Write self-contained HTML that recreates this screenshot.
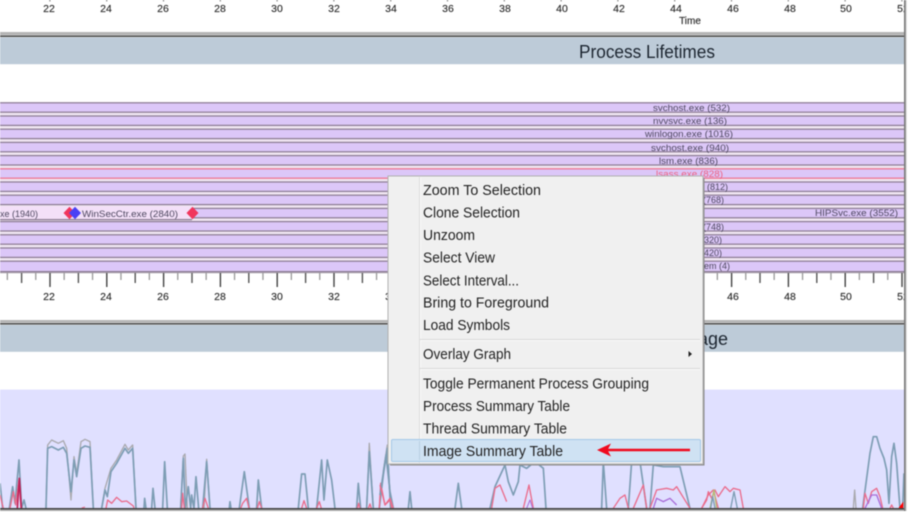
<!DOCTYPE html>
<html>
<head>
<meta charset="utf-8">
<style>
html,body{margin:0;padding:0;background:#fff;width:908px;height:512px;overflow:hidden}
svg{display:block;filter:blur(0.45px)}
text{font-family:"Liberation Sans",sans-serif}
.ax{font-size:10.5px;fill:#2c2c2c;text-anchor:middle;stroke:#2c2c2c;stroke-width:.15px}
.lb{font-size:9px;fill:#4e4860;text-anchor:end}
.m{font-size:14.5px;fill:#222}
.t{font-size:18px;fill:#1c2530}
</style>
</head>
<body>
<svg width="908" height="512" viewBox="0 0 908 512" xmlns="http://www.w3.org/2000/svg">
<rect width="908" height="512" fill="#fff"/>

<!-- top axis -->
<line x1="-7.5" x2="904" y1="0.7" y2="0.7" stroke="#777" stroke-width="1.4" stroke-dasharray="1.2 55.6"/>
<text class="ax" x="49" y="12">22</text><text class="ax" x="106" y="12">24</text><text class="ax" x="163" y="12">26</text><text class="ax" x="220" y="12">28</text><text class="ax" x="277" y="12">30</text><text class="ax" x="334" y="12">32</text><text class="ax" x="391" y="12">34</text><text class="ax" x="448" y="12">36</text><text class="ax" x="505" y="12">38</text><text class="ax" x="562" y="12">40</text><text class="ax" x="619" y="12">42</text><text class="ax" x="676" y="12">44</text><text class="ax" x="733" y="12">46</text><text class="ax" x="790" y="12">48</text><text class="ax" x="846" y="12">50</text><text class="ax" x="903" y="12">52</text>
<text class="ax" x="690" y="24" style="font-size:10px">Time</text>

<!-- Process Lifetimes header -->
<rect x="0" y="32" width="908" height="3" fill="#b4b4b4"/>
<rect x="0" y="35.4" width="908" height="1.6" fill="#4c4c4c"/>
<rect x="0" y="37.4" width="908" height="26.8" fill="#bdcbd8"/>
<text class="t" x="579" y="58" textLength="136" lengthAdjust="spacingAndGlyphs">Process Lifetimes</text>

<!-- process rows -->
<rect x="0" y="102" width="908" height="170.6" fill="#efe5f1"/>
<g fill="#dcc7f8" stroke="#8a7a92" stroke-width="1.2">
<rect x="-2" y="102.8" width="912" height="9.4"/>
<rect x="-2" y="116" width="912" height="9.4"/>
<rect x="-2" y="129.2" width="912" height="9.4"/>
<rect x="-2" y="142.4" width="912" height="9.4"/>
<rect x="-2" y="155.6" width="912" height="9.4"/>
<rect x="-2" y="168.8" width="912" height="9.4" stroke="#ee6f8c"/>
<rect x="-2" y="182" width="912" height="9.4"/>
<rect x="-2" y="195.2" width="912" height="9.4"/>
<rect x="-2" y="208.4" width="912" height="9.4"/>
<rect x="-2" y="221.6" width="912" height="9.4"/>
<rect x="-2" y="234.8" width="912" height="9.4"/>
<rect x="-2" y="248" width="912" height="9.4"/>
<rect x="-2" y="261.2" width="912" height="10.4"/>
</g>
<rect x="0" y="206.4" width="192" height="13" fill="#f3e0f8"/>
<line x1="0" x2="192" y1="219.6" y2="219.6" stroke="#8a7a92" stroke-width="1.2"/>

<text class="lb" x="730" y="111" textLength="77" lengthAdjust="spacingAndGlyphs" dx="-77" style="text-anchor:start">svchost.exe (532)</text>
<text class="lb" x="727" y="124" textLength="74" lengthAdjust="spacingAndGlyphs" dx="-74" style="text-anchor:start">nvvsvc.exe (136)</text>
<text class="lb" x="733" y="137" textLength="88" lengthAdjust="spacingAndGlyphs" dx="-88" style="text-anchor:start">winlogon.exe (1016)</text>
<text class="lb" x="729" y="151" textLength="78" lengthAdjust="spacingAndGlyphs" dx="-78" style="text-anchor:start">svchost.exe (940)</text>
<text class="lb" x="718" y="164" textLength="59" lengthAdjust="spacingAndGlyphs" dx="-59" style="text-anchor:start">lsm.exe (836)</text>
<text class="lb" x="723" y="177" textLength="67" lengthAdjust="spacingAndGlyphs" dx="-67" style="text-anchor:start;fill:#ee5f80">lsass.exe (828)</text>
<text class="lb" x="728" y="190">services.exe (812)</text>
<text class="lb" x="724" y="203">csrss.exe (768)</text>
<text class="lb" x="724" y="230">csrss.exe (748)</text>
<text class="lb" x="722" y="243">smss.exe (320)</text>
<text class="lb" x="722" y="256">smss.exe (420)</text>
<text class="lb" x="730" y="269">System (4)</text>
<text class="lb" x="898" y="216" textLength="83" lengthAdjust="spacingAndGlyphs" style="text-anchor:start" dx="-83">HIPSvc.exe (3552)</text>
<text class="lb" x="38" y="217">explorer.exe (1940)</text>
<text class="lb" x="82" y="217" textLength="96" lengthAdjust="spacingAndGlyphs" style="text-anchor:start">WinSecCtr.exe (2840)</text>
<polygon points="63.5,213 69.5,206.8 75.5,213 69.5,219.2" fill="#f0355c"/>
<polygon points="69,213 75,206.8 81,213 75,219.2" fill="#4a40f4"/>
<polygon points="186.5,213 192.5,206.8 198.5,213 192.5,219.2" fill="#f0355c"/>

<!-- middle axis -->
<rect x="0" y="272" width="908" height="1.2" fill="#a49aa8"/>
<line x1="-7.5" x2="904" y1="280" y2="280" stroke="#444" stroke-width="14" stroke-dasharray="1.4 55.4"/>
<line x1="20.9" x2="904" y1="278" y2="278" stroke="#555" stroke-width="10" stroke-dasharray="1.4 55.4"/>
<line x1="6.7" x2="904" y1="276.5" y2="276.5" stroke="#999" stroke-width="7" stroke-dasharray="1.3 27.1"/>
<text class="ax" x="49" y="300">22</text><text class="ax" x="106" y="300">24</text><text class="ax" x="163" y="300">26</text><text class="ax" x="220" y="300">28</text><text class="ax" x="277" y="300">30</text><text class="ax" x="334" y="300">32</text><text class="ax" x="391" y="300">34</text><text class="ax" x="733" y="300">46</text><text class="ax" x="790" y="300">48</text><text class="ax" x="846" y="300">50</text><text class="ax" x="903" y="300">52</text>

<!-- second header -->
<rect x="0" y="320" width="908" height="2.6" fill="#b4b4b4"/>
<rect x="0" y="323" width="908" height="1.6" fill="#4c4c4c"/>
<rect x="0" y="325" width="908" height="26.8" fill="#bdcbd8"/>
<text class="t" x="728" y="345" text-anchor="end">CPU Usage</text>

<!-- graph -->
<rect x="0" y="389.6" width="908" height="118.4" fill="#e0e0ff"/>
<g fill="none" stroke-linejoin="round">
<g transform="translate(0,380) scale(.3333)">
<g stroke="#a9a9ae" stroke-width="4">
<path d="M138 385 143 195 155 180 175 190 190 182 200 205 213 360 222 230 230 280 243 185 255 178 270 185 280 385"/>
<path d="M305 385 315 325 333 265 350 240 375 193 385 210 398 195 408 385M1100 385 1108 190 1120 385M1150 275 1162 195 1172 385M542 385 550 228 555 222 562 385M612 385 620 238 630 385"/>
</g>
<g stroke="#7d9db4" stroke-width="5">
<path d="M0 310 8 385M28 385 38 320 45 370 57 240 65 385 72 360 78 385"/>
<path d="M138 385 143 205 155 200 175 210 190 202 200 220 213 335 222 240 230 290 243 205 255 198 270 202 280 385"/>
<path d="M305 385 315 330 322 350 333 275 350 250 375 205 385 220 398 205 408 385"/>
<path d="M432 385 434 355 438 385M455 385 459 325 465 385M488 385 494 245 502 385"/>
<path d="M542 385 550 235 556 385 565 320 572 385 575 345 582 385 588 290 596 385M608 385 620 245 630 385"/>
<path d="M688 385 690 365 693 385M718 385 733 275 748 385M770 385 775 300 785 385"/>
<path d="M895 385 905 282 915 282 925 385M950 385 965 240 972 360 982 240 995 300 1005 385"/>
<path d="M1070 385 1075 310 1082 385M1100 385 1108 215 1120 385M1138 385 1150 285 1162 205 1172 385"/>
</g>
<g stroke="#ea6c8c" stroke-width="4">
<path d="M0 345 10 385M30 385 40 335 47 375 57 300 63 385"/>
<path d="M318 385 323 360 335 370 350 352 365 365 380 363 400 378 402 385"/>
<path d="M545 385 548 340 553 385M608 385 615 355 625 385M722 385 728 370 740 355 747 385M772 385 778 365 785 385"/>
<path d="M905 385 912 362 920 385M950 385 958 365 964 385M1072 385 1076 370 1080 385M1105 385 1110 372 1114 385M1138 385 1142 310 1155 375 1170 360 1176 385"/>
<path d="M245 384 255 381" stroke-width="3"/>
</g>
<path d="M52 385 58 295 64 385" stroke="#c02058" stroke-width="5"/>
</g>
<g transform="translate(380,335) scale(.3333)">
<g stroke="#7d9db4" stroke-width="5">
<path d="M0 480 18 360 30 470 40 520M85 520 90 470 95 520M225 520 235 445 245 520"/>
<path d="M330 520 345 455 375 390 385 440 400 480 415 440 420 390 440 400 465 380 490 400 498 520"/>
<path d="M665 520 670 380 680 520M745 520 755 380 780 380 800 520M810 520 820 390 850 395 900 395 930 520"/>
</g>
<g stroke="#ea6c8c" stroke-width="4">
<path d="M0 450 15 510 30 490 40 520M335 520 345 460 360 450 380 500M430 520 447 450 460 520"/>
<path d="M700 520 720 490 735 480 745 520M760 520 790 450 800 520M810 520 830 465 860 460 880 465 890 455 930 520"/>
<path d="M965 520 985 480 1000 465 1015 520"/>
</g>
<path d="M820 520 830 490 850 500 870 490 890 510" stroke="#a86cd8" stroke-width="4"/>
<path d="M440 520 450 495 458 520" stroke="#a86cd8" stroke-width="3"/>
</g>
<g transform="translate(690,380) scale(.3333)">
<path d="M35 385 50 360 55 335 65 355 75 330 85 350 105 320 120 335 130 325 150 330 160 385" stroke="#ea6c8c" stroke-width="4"/>
<path d="M60 385 72 330 80 385" stroke="#b5bc78" stroke-width="4"/>
<path d="M62 385 68 350 75 385M122 385 132 335 142 385" stroke="#7d9db4" stroke-width="4"/>
<path d="M490 385 494 330 498 385" stroke="#a9a9ae" stroke-width="4"/>
<path d="M518 385 530 295 540 220 550 170 560 170 570 205 582 235 590 270 597 370 605 230 612 190 620 250 630 385M638 385 642 280" stroke="#7d9db4" stroke-width="5"/>
<path d="M520 385 525 340 535 370 545 335 560 325 570 350 578 385M600 385 605 375 610 385" stroke="#ea6c8c" stroke-width="4"/>
<path d="M525 385 545 345 560 345 575 385" stroke="#a86cd8" stroke-width="4"/>
<path d="M625 385 640 365 640 385Z" fill="#f00" stroke="none"/>
</g>
</g>

<!-- window edges -->
<rect x="0" y="508" width="908" height="1.5" fill="#444"/>
<rect x="0" y="509.5" width="908" height="1.5" fill="#aaa"/>
<rect x="904" y="0" width="4" height="512" fill="#fff"/>
<rect x="904" y="0" width="1.6" height="511" fill="#7a7a7a"/>
<rect x="905.6" y="0" width="1" height="511" fill="#c4c4c4"/>

<!-- context menu -->
<rect x="390" y="178" width="314.5" height="287.5" fill="#8a8a8a"/>
<rect x="388" y="176" width="315" height="288" fill="#f0f0f0" stroke="#b0b0b0"/>
<rect x="419" y="177" width="1" height="286" fill="#dcdcdc"/>
<rect x="420" y="177" width="1" height="286" fill="#fafafa"/>
<rect x="420" y="339" width="280" height="1" fill="#d8d8d8"/>
<rect x="420" y="340" width="280" height="1" fill="#fbfbfb"/>
<rect x="420" y="368" width="280" height="1" fill="#d8d8d8"/>
<rect x="420" y="369" width="280" height="1" fill="#fbfbfb"/>
<rect x="391.5" y="439.5" width="309" height="22" rx="1.5" fill="#cfe2f3" stroke="#a4c8e8"/>
<rect x="419" y="441" width="1" height="19" fill="#b9cfe2"/>
<text class="m" x="423" y="195" textLength="118" lengthAdjust="spacingAndGlyphs">Zoom To Selection</text>
<text class="m" x="423" y="217.5" textLength="97" lengthAdjust="spacingAndGlyphs">Clone Selection</text>
<text class="m" x="423" y="240" textLength="52" lengthAdjust="spacingAndGlyphs">Unzoom</text>
<text class="m" x="423" y="262.5" textLength="72" lengthAdjust="spacingAndGlyphs">Select View</text>
<text class="m" x="423" y="285.5" textLength="96" lengthAdjust="spacingAndGlyphs">Select Interval...</text>
<text class="m" x="423" y="307.5" textLength="126" lengthAdjust="spacingAndGlyphs">Bring to Foreground</text>
<text class="m" x="423" y="330" textLength="87" lengthAdjust="spacingAndGlyphs">Load Symbols</text>
<text class="m" x="423" y="359" textLength="88" lengthAdjust="spacingAndGlyphs">Overlay Graph</text>
<text class="m" x="423" y="388.5" textLength="226" lengthAdjust="spacingAndGlyphs">Toggle Permanent Process Grouping</text>
<text class="m" x="423" y="411" textLength="147" lengthAdjust="spacingAndGlyphs">Process Summary Table</text>
<text class="m" x="423" y="433.5" textLength="144" lengthAdjust="spacingAndGlyphs">Thread Summary Table</text>
<text class="m" x="423" y="456" textLength="140" lengthAdjust="spacingAndGlyphs">Image Summary Table</text>
<polygon points="688.5,351 692,354 688.5,357" fill="#222"/>

<!-- red arrow -->
<line x1="606" x2="690" y1="450" y2="450" stroke="#f00a1e" stroke-width="2.4"/>
<polygon points="597,450 611,443.5 607.5,450 611,456.5" fill="#f00a1e"/>
</svg>
</body>
</html>
